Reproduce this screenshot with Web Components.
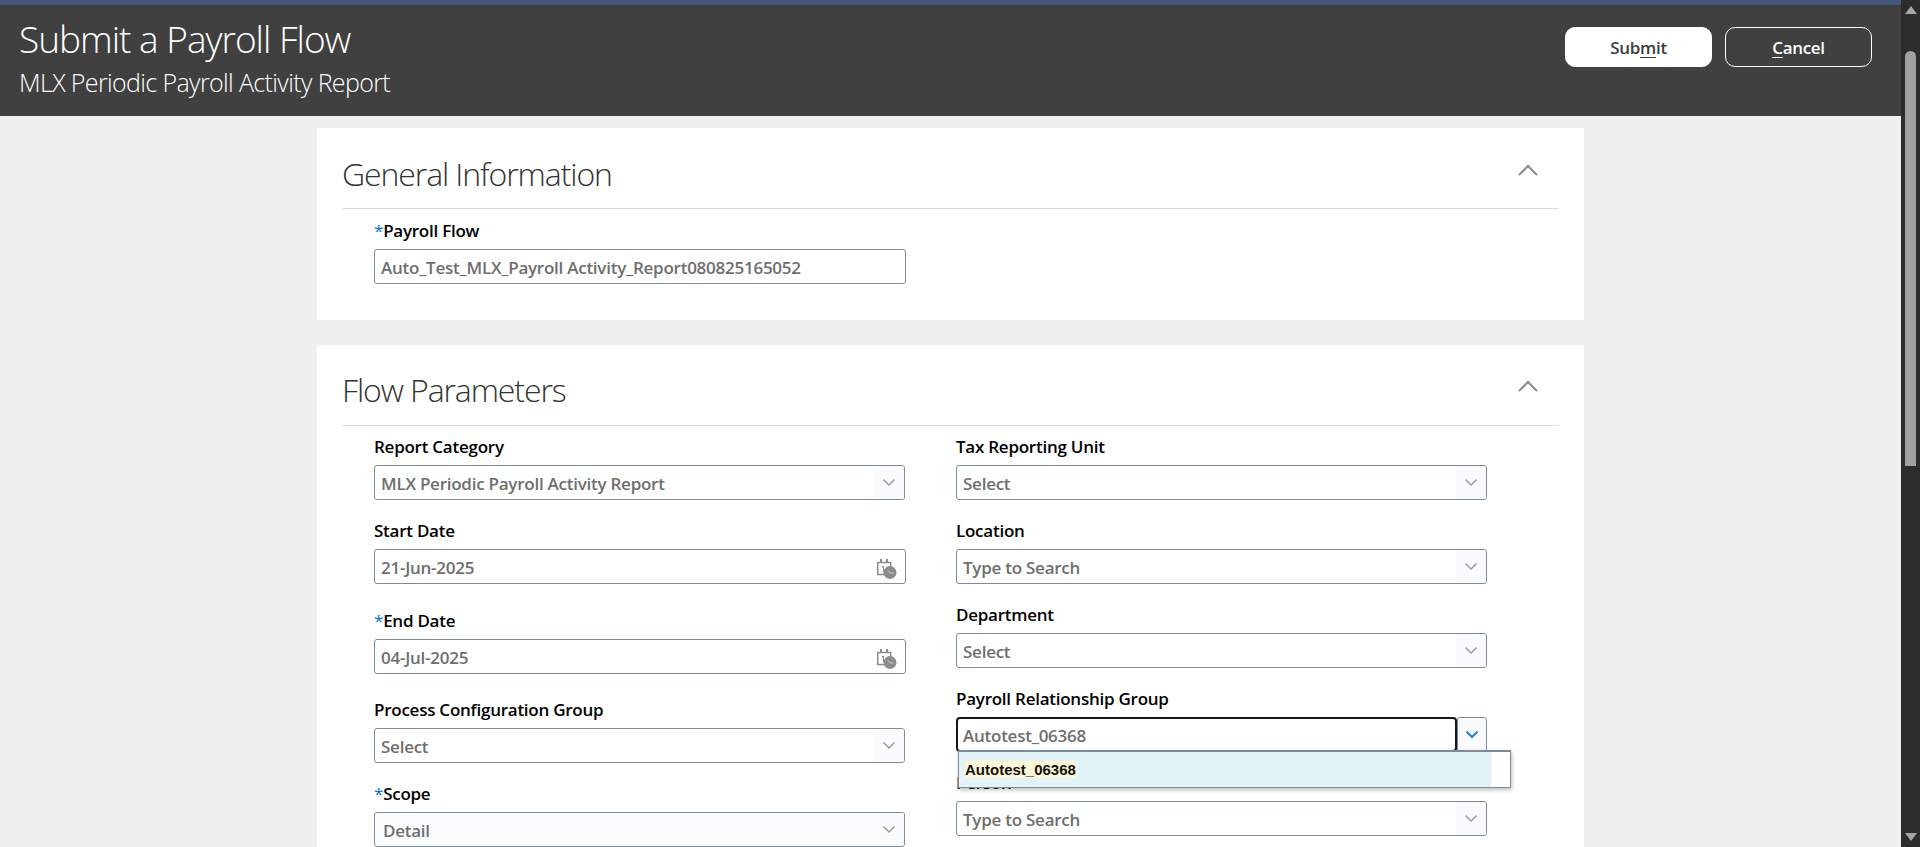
<!DOCTYPE html>
<html lang="en">
<head>
<meta charset="utf-8">
<title>Submit a Payroll Flow</title>
<style>
  html, body { margin: 0; height: 100%; overflow: hidden; }
  body { font-family: "Open Sans", "Noto Sans", sans-serif; background: #f0f0f0; }
</style>
</head>
<body>
<flow-page>
  <flow-header slot="header" title="Submit a Payroll Flow" subtitle="MLX Periodic Payroll Activity Report"></flow-header>
  <flow-card title="General Information" top="12">
    <flow-field label="Payroll Flow" value="Auto_Test_MLX_Payroll Activity_Report080825165052" required wide></flow-field>
  </flow-card>
  <flow-card title="Flow Parameters" top="11" style="--head-shift:-1px">
    <div style="display:flex;gap:50px">
      <div style="width:532px">
        <flow-field label="Report Category" value="MLX Periodic Payroll Activity Report" type="select" trim></flow-field>
        <flow-field label="Start Date" value="21-Jun-2025" type="date" after="6"></flow-field>
        <flow-field label="End Date" value="04-Jul-2025" type="date" required after="5"></flow-field>
        <flow-field label="Process Configuration Group" value="Select" type="select" trim></flow-field>
        <flow-field label="Scope" value="Detail" type="select" required trim tinted></flow-field>
      </div>
      <div style="width:531px">
        <flow-field label="Tax Reporting Unit" value="Select" type="select"></flow-field>
        <flow-field label="Location" value="Type to Search" type="select"></flow-field>
        <flow-field label="Department" value="Select" type="select"></flow-field>
        <flow-field label="Payroll Relationship Group" value="Autotest_06368" type="select" open></flow-field>
        <flow-field label="Person" value="Type to Search" type="select"></flow-field>
      </div>
    </div>
  </flow-card>
</flow-page>

<script>
const pageTemplate = document.createElement('template');
pageTemplate.innerHTML = `
<style>
  :host { display: flex; height: 847px; overflow: hidden; }
  .page { flex: 1; min-width: 0; display: flex; flex-direction: column; }
  .main { flex: 1; min-height: 0; overflow: hidden; padding: 12px 0 0 317px; width: 1267px; }
  .bar { width: 19px; background: #2c2c2c; display: flex; flex-direction: column; align-items: center; }
  .up { margin-top: 6px; width: 0; height: 0; border: 6px solid transparent; border-top: 0; border-bottom: 8px solid #a6a6a6; }
  .thumb { margin-top: 37px; width: 11px; height: 415px; border-radius: 6px 6px 0 0; background: #a0a0a0; }
  .down { margin-top: auto; margin-bottom: 6px; width: 0; height: 0; border: 6px solid transparent; border-bottom: 0; border-top: 8px solid #a6a6a6; }
</style>
<div class="page">
  <slot name="header"></slot>
  <div class="main"><slot></slot></div>
</div>
<div class="bar"><div class="up"></div><div class="thumb"></div><div class="down"></div></div>
`;

class FlowPage extends HTMLElement {
  constructor() {
    super();
    this.attachShadow({ mode: 'open' }).appendChild(pageTemplate.content.cloneNode(true));
  }
}

const headerTemplate = document.createElement('template');
headerTemplate.innerHTML = `
<style>
  :host { display: flex; justify-content: space-between; box-sizing: border-box; height: 116px; padding: 0 29px 0 19px; background: #404040; border-top: 5px solid #43587a; color: #fff; }
  h1 { margin: 13px 0 0; font-size: 37px; line-height: 42px; font-weight: 300; letter-spacing: -1px; }
  h2 { margin: 6px 0 0; font-size: 25px; line-height: 32px; font-weight: 300; letter-spacing: -.63px; }
  .actions { display: flex; gap: 13px; padding-top: 22px; }
  button { box-sizing: border-box; width: 147px; height: 40px; border-radius: 10px; border: 1px solid #fff; font: 600 17px "Open Sans", sans-serif; letter-spacing: -.3px; padding: 0; }
  .submit { background: #fff; color: #3c3c3c; }
  .cancel { background: transparent; color: #fff; }
  u { text-underline-offset: 3px; }
</style>
<div>
  <h1 id="title"></h1>
  <h2 id="subtitle"></h2>
</div>
<div class="actions">
  <button class="submit">Sub<u>m</u>it</button>
  <button class="cancel"><u>C</u>ancel</button>
</div>
`;

class FlowHeader extends HTMLElement {
  constructor() {
    super();
    const root = this.attachShadow({ mode: 'open' });
    root.appendChild(headerTemplate.content.cloneNode(true));
    root.getElementById('title').textContent = this.getAttribute('title');
    root.getElementById('subtitle').textContent = this.getAttribute('subtitle');
  }
}

const cardTemplate = document.createElement('template');
cardTemplate.innerHTML = `
<style>
  :host { display: block; box-sizing: border-box; width: 1267px; background: #fff; padding: 0 25px 36px; margin-bottom: 25px; }
  .head { box-sizing: border-box; height: 81px; display: flex; justify-content: space-between; border-bottom: 1px solid #d6dfe8; }
  h3 { margin: calc(25px + var(--head-shift, 0px)) 0 0; font-size: 32px; line-height: 42px; font-weight: 300; letter-spacing: -1.1px; color: #333; }
  svg { margin: calc(36px + var(--head-shift, 0px)) 21px 0 0; }
  .body { padding-left: 32px; }
</style>
<div class="head">
  <h3 id="title"></h3>
  <svg width="20" height="12" viewBox="0 0 20 12"><path d="M1 11 10 2l9 9" fill="none" stroke="#8a8a8a" stroke-width="2"/></svg>
</div>
<div class="body" id="body"><slot></slot></div>
`;

class FlowCard extends HTMLElement {
  constructor() {
    super();
    const root = this.attachShadow({ mode: 'open' });
    root.appendChild(cardTemplate.content.cloneNode(true));
    root.getElementById('title').textContent = this.getAttribute('title');
    root.getElementById('body').style.paddingTop = `${this.getAttribute('top')}px`;
  }
}

const fieldTemplate = document.createElement('template');
fieldTemplate.innerHTML = `
<style>
  :host { display: block; position: relative; height: 84px; color: #000; }
  label { display: block; height: 28px; font-size: 17px; line-height: 20px; font-weight: 600; letter-spacing: -.25px; white-space: nowrap; }
  .req { color: #0572ce; font-weight: 400; }
  .row { display: flex; height: 35px; }
  .box { flex: 1; min-width: 0; box-sizing: border-box; display: flex; align-items: center; justify-content: space-between; border: 1px solid #7b8c9a; border-radius: 3px; background: #fff; overflow: hidden; }
  .value { padding: 1px 0 0 6px; font-size: 17px; font-weight: 600; letter-spacing: -.25px; color: #6e6e6e; white-space: nowrap; }
  .icon { align-self: stretch; width: 30px; flex: none; display: flex; align-items: center; justify-content: center; }
  .select .icon { background: #f9fbfc; }
  .date .icon { width: 21px; margin: 3px 8px 0 0; }
  .tinted { background: #fafcfe; }
  .tinted .value { padding-left: 8px; }
  .focus { border: 2px solid #161616; border-radius: 4px; }
  .focus .value { padding-left: 5px; }
  .toggle { width: 30px; flex: none; box-sizing: border-box; border: 1px solid #7b8c9a; border-radius: 3px; background: #f9fbfe; display: flex; align-items: center; justify-content: center; }
  .list { position: absolute; left: 2px; top: 61px; z-index: 2; box-sizing: border-box; width: 553px; height: 38px; background: #fff; border: 1px solid #7b8c9a; border-top-width: 2px; box-shadow: 1px 2px 4px rgba(0,0,0,.25); }
  .option { box-sizing: border-box; width: 532px; height: 100%; padding-left: 6px; background: #e3f4f9; display: flex; align-items: center; }
  mark { background: #fdf7d8; color: #111; font: bold 15px "Liberation Sans", sans-serif; line-height: 17px; }
</style>
<label><span class="req" id="req"></span><span id="label"></span></label>
<div class="row" id="row">
  <div class="box" id="box"><span class="value" id="value"></span></div>
</div>
`;

const chevron = (color, width) => `<svg width="14" height="9" viewBox="0 0 14 9"><path d="M1.500 1.500 7 7l5.500-5.500" fill="none" stroke="${color}" stroke-width="${width}"/></svg>`;
const dateIcon = `<svg width="21" height="21" viewBox="0 0 21 21"><path d="M1.700 4.500h13v12h-13z" fill="none" stroke="#8c8c8c" stroke-width="1.500"/><path d="M4 1h2v4H4zM10 1h2v4h-2zM6 8h2v6H7V9.500H6z" fill="#8c8c8c"/><circle cx="14" cy="14.500" r="6.500" fill="#8c8c8c"/><path d="M11.500 12.500l3 2.500h3" fill="none" stroke="#d4d4d4"/></svg>`;

class FlowField extends HTMLElement {
  constructor() {
    super();
    const root = this.attachShadow({ mode: 'open' });
    root.appendChild(fieldTemplate.content.cloneNode(true));
    root.getElementById('label').textContent = this.getAttribute('label');
    root.getElementById('value').textContent = this.getAttribute('value');
    if (this.hasAttribute('required')) {
      root.getElementById('req').textContent = '*';
    }
    if (this.hasAttribute('after')) {
      this.style.marginBottom = `${this.getAttribute('after')}px`;
    }
    if (this.hasAttribute('wide')) {
      this.style.width = '532px';
      this.style.height = '63px';
    }
    if (this.hasAttribute('trim')) {
      root.getElementById('row').style.width = '531px';
    }
    const box = root.getElementById('box');
    const type = this.getAttribute('type');
    if (this.hasAttribute('tinted')) {
      box.classList.add('tinted');
    }
    if (this.hasAttribute('open')) {
      this.renderOpen(root, box);
    } else if (type === 'select' || type === 'date') {
      const icon = document.createElement('span');
      icon.className = 'icon';
      icon.innerHTML = type === 'select' ? chevron('#9a9a9a', 1.5) : dateIcon;
      box.classList.add(type);
      box.appendChild(icon);
    }
  }

  renderOpen(root, box) {
    box.classList.add('focus');
    const toggle = document.createElement('span');
    toggle.className = 'toggle';
    toggle.innerHTML = chevron('#2f81c7', 2);
    root.getElementById('row').appendChild(toggle);
    const list = document.createElement('div');
    list.className = 'list';
    list.innerHTML = `<div class="option"><mark>${this.getAttribute('value')}</mark></div>`;
    root.appendChild(list);
  }
}

customElements.define('flow-page', FlowPage);
customElements.define('flow-header', FlowHeader);
customElements.define('flow-card', FlowCard);
customElements.define('flow-field', FlowField);
</script>
</body>
</html>
